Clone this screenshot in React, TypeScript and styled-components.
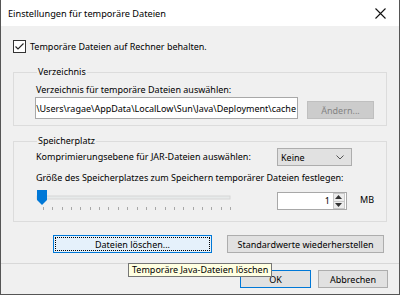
import styled, { createGlobalStyle } from "styled-components";

const GlobalStyle = createGlobalStyle`
  html, body {
    margin: 0;
    padding: 0;
    background: #f0f0f0;
  }
  body {
    font-family: "Segoe UI", "Noto Sans", "Liberation Sans", sans-serif;
    font-size: 9px;
    color: #000;
  }
  * {
    box-sizing: border-box;
  }
`;

const TICKS = Array.from({length: 21}, (_, i) => 8 + i * 9.35);

const App = () => {
  return (
    <>
      <GlobalStyle/>
      <Window>
        <TitleBar>
          <Title>Einstellungen für temporäre Dateien</Title>
          <CloseButton>
            <svg width="11" height="11" viewBox="0 0 11 11">
              <path d="M0.5 0.5 L10.5 10.5 M10.5 0.5 L0.5 10.5" stroke="#111" strokeWidth="1.1"/>
            </svg>
          </CloseButton>
        </TitleBar>

        <Body>
          <CheckRow>
            <svg width="13" height="13" viewBox="0 0 13 13">
              <rect x="0.5" y="0.5" width="12" height="12" fill="#fff" stroke="#333"/>
              <path d="M2.5 6.5 L5 9 L10.5 3.5" fill="none" stroke="#222" strokeWidth="1.1"/>
            </svg>
            <span>Temporäre Dateien auf Rechner behalten.</span>
          </CheckRow>

          <Group $bottom={6}>
            <Legend>Verzeichnis</Legend>
            <Label>Verzeichnis für temporäre Dateien auswählen:</Label>
            <PathRow>
              <PathInput>
                <span>C:\Users\ragae\AppData\LocalLow\Sun\Java\Deployment\cache</span>
              </PathInput>
              <Button $disabled $width={67}>Ändern...</Button>
            </PathRow>
          </Group>

          <Group $spaced $bottom={10}>
            <Legend>Speicherplatz</Legend>
            <SettingRow>
              <Label>Komprimierungsebene für JAR-Dateien auswählen:</Label>
              <Combo>
                <span>Keine</span>
                <svg width="8" height="5" viewBox="0 0 8 5">
                  <path d="M0.5 0.5 L4 4 L7.5 0.5" fill="none" stroke="#555"/>
                </svg>
              </Combo>
            </SettingRow>
            <Label $top={5}>Größe des Speicherplatzes zum Speichern temporärer Dateien festlegen:</Label>
            <SliderRow>
              <svg width="200" height="21" viewBox="0 0 200 21">
                <rect x="2" y="6" width="193" height="3" fill="#e7eaea" stroke="#d6d6d6" strokeWidth="1"/>
                {TICKS.map((x) => (
                  <rect key={x} x={Math.round(x)} y="17" width="1" height="3" fill="#a8a8a8"/>
                ))}
                <path d="M2 0 H12 V10 L7 15 L2 10 Z" fill="#0078d7"/>
              </svg>
              <Spinner>
                <SpinValue>1</SpinValue>
                <SpinButtons>
                  <SpinHalf>
                    <svg width="7" height="4" viewBox="0 0 7 4"><path d="M0 4 L3.5 0 L7 4 Z" fill="#333"/></svg>
                  </SpinHalf>
                  <SpinHalf>
                    <svg width="7" height="4" viewBox="0 0 7 4"><path d="M0 0 L3.5 4 L7 0 Z" fill="#333"/></svg>
                  </SpinHalf>
                </SpinButtons>
              </Spinner>
              <Unit>MB</Unit>
            </SliderRow>
          </Group>

          <ActionRow>
            <Button $focused $width={159}>Dateien löschen...</Button>
            <Button $width={157}>Standardwerte wiederherstellen</Button>
          </ActionRow>
        </Body>

        <Footer>
          <Button $default $width={71}>OK</Button>
          <Button $width={70}>Abbrechen</Button>
        </Footer>

        <Tooltip>Temporäre Java-Dateien löschen</Tooltip>
      </Window>
    </>
  );
};

const Window = styled.div`
  position: relative;
  width: 400px;
  height: 295px;
  background: #f0f0f0;
  border: 1px solid #555;
  border-top: none;
  display: flex;
  flex-direction: column;
`;

const TitleBar = styled.div`
  height: 26px;
  background: #fff;
  display: flex;
  align-items: center;
  justify-content: space-between;
  padding-left: 7px;
`;

const Title = styled.span`
  font-size: 9.2px;
`;

const CloseButton = styled.div`
  width: 24px;
  display: flex;
  align-items: center;
  justify-content: center;
  margin-right: 7px;
`;

const Body = styled.div`
  padding: 0 12px;
  display: flex;
  flex-direction: column;
`;

const CheckRow = styled.label`
  margin-top: 14px;
  height: 13px;
  display: flex;
  align-items: center;
  gap: 4px;
  line-height: 13px;

  svg {
    flex: none;
  }
`;

const Group = styled.fieldset<{ $spaced?: boolean; $bottom: number }>`
  margin: ${({$spaced}) => ($spaced ? "8px" : "12px")} 0 0;
  padding: 0 12px ${({$bottom}) => $bottom}px 21px;
  min-width: 0;
  border: 1px solid #dcdcdc;
  display: flex;
  flex-direction: column;
`;

const Legend = styled.legend`
  padding: 0 1px;
  margin-left: 2px;
  line-height: 14px;
`;

const Label = styled.div<{ $top?: number }>`
  margin: ${({$top}) => $top ?? 4}px 0 0 1px;
  line-height: 14px;
  white-space: nowrap;
`;

const PathRow = styled.div`
  display: flex;
  align-items: flex-end;
  justify-content: space-between;
`;

const PathInput = styled.div`
  width: 263px;
  height: 22px;
  background: #fff;
  border: 1px solid #a8a8a8;
  display: flex;
  align-items: center;
  justify-content: flex-end;
  overflow: hidden;
  padding-right: 1px;
  white-space: nowrap;
`;

const Button = styled.div<{ $width: number; $disabled?: boolean; $focused?: boolean; $default?: boolean }>`
  width: ${({$width}) => $width}px;
  height: 18px;
  display: flex;
  align-items: center;
  justify-content: center;
  white-space: nowrap;
  background: ${({$disabled, $focused}) => ($disabled ? "#cccccc" : $focused ? "#e5f1fb" : "#e1e1e1")};
  border: 1px solid ${({$disabled, $focused, $default}) => ($disabled ? "#bfbfbf" : $focused || $default ? "#0078d7" : "#adadad")};
  color: ${({$disabled}) => ($disabled ? "#838383" : "#000")};
  outline: ${({$focused}) => ($focused ? "1px dotted #000" : "none")};
  outline-offset: -3px;
`;

const SettingRow = styled.div`
  display: grid;
  grid-template-columns: 242px auto;
  align-items: center;

  & > div:first-child {
    margin-top: 0;
  }
`;

const Combo = styled.div`
  width: 75px;
  height: 18px;
  background: #e1e1e1;
  border: 1px solid #adadad;
  display: flex;
  align-items: center;
  justify-content: space-between;
  padding: 0 7px 0 3px;
`;

const SliderRow = styled.div`
  margin-top: 5px;
  height: 21px;
  display: flex;
  align-items: flex-start;

  & > svg {
    flex: none;
    margin-right: 42px;
  }
`;

const Spinner = styled.div`
  margin-top: 2px;
  width: 72px;
  height: 18px;
  background: #fff;
  border: 1px solid #a8a8a8;
  display: flex;
`;

const SpinValue = styled.div`
  flex: 1;
  text-align: right;
  line-height: 16px;
  padding-right: 3px;
`;

const SpinButtons = styled.div`
  width: 12px;
  display: flex;
  flex-direction: column;
  margin: 0 1px 0 0;
`;

const SpinHalf = styled.div`
  flex: 1;
  display: flex;
  align-items: center;
  justify-content: center;
  background: #ececec;
  border: 1px solid #c8c8c8;

  & + & {
    border-top: none;
  }
`;

const Unit = styled.div`
  margin: 3px 0 0 13px;
  line-height: 14px;
`;

const ActionRow = styled.div`
  margin-top: 13px;
  padding-left: 40px;
  display: flex;
  gap: 15px;
`;

const Footer = styled.div`
  margin-top: 10px;
  border-top: 1px solid #d8d8d8;
  padding: 6px 11px 0 0;
  display: flex;
  justify-content: flex-end;
  gap: 7px;
`;

const Tooltip = styled.div`
  position: absolute;
  left: 127px;
  top: 263px;
  height: 14px;
  padding: 0 3px;
  line-height: 12px;
  background: #ffffe1;
  border: 1px solid #767676;
  white-space: nowrap;
`;

export default App;
